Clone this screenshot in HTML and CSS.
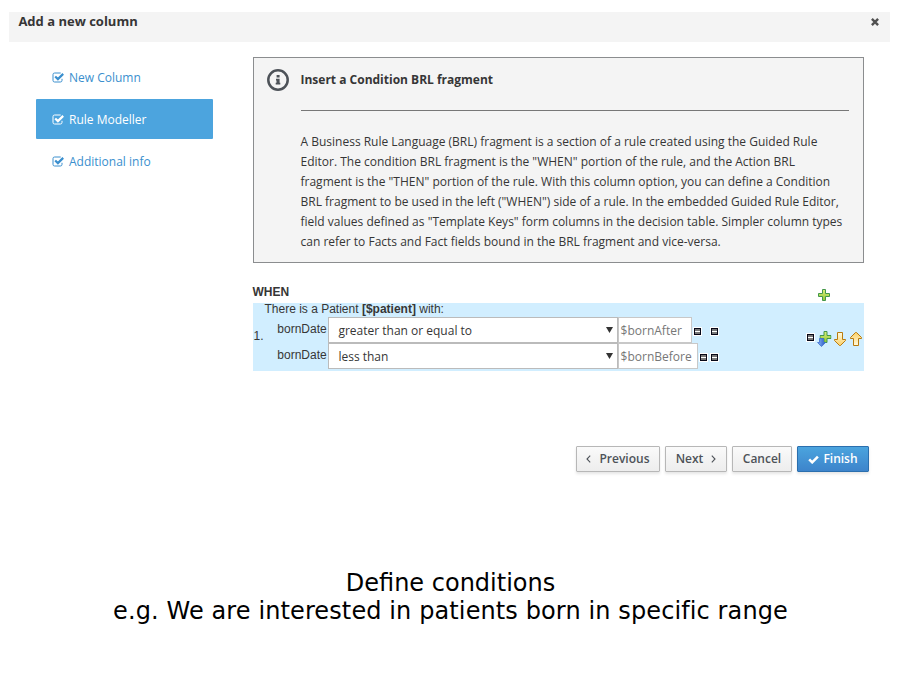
FILE: index.html
```html
<!DOCTYPE html>
<html lang="en">
<head>
<meta charset="utf-8">
<title>Add a new column</title>
<link rel="stylesheet" href="styles.css">
</head>
<body>
<svg class="defs" width="0" height="0" aria-hidden="true">
  <defs>
    <linearGradient id="gold" x1="0" y1="0" x2="0" y2="1"><stop offset="0" stop-color="#fffbe0"/><stop offset="1" stop-color="#fbd068"/></linearGradient>
    <linearGradient id="green" x1="0" y1="0" x2="0" y2="1"><stop offset="0" stop-color="#dcef7c"/><stop offset="1" stop-color="#8fc832"/></linearGradient>
    <linearGradient id="blue" x1="0" y1="0" x2="1" y2="0"><stop offset="0" stop-color="#8db5f5"/><stop offset="1" stop-color="#2457c4"/></linearGradient>
    <symbol id="checkbox" viewBox="0 0 12 11"><path d="M8.700 1H2.600A1.600 1.600 0 0 0 1 2.600v5.800A1.600 1.600 0 0 0 2.600 10h5.800a1.600 1.600 0 0 0 1.600-1.600V6.800" fill="none" stroke="currentColor" stroke-width="1"/><path d="M3.200 4.500 5.900 7.100 11.200 1.900" fill="none" stroke="currentColor" stroke-width="2.200"/></symbol>
    <symbol id="minus" viewBox="0 0 9 9"><path fill="#fff" d="M0 0h9v9H0z"/><path fill="#080818" d="M1 1h7v7H1z"/><path fill="#777" d="M2 2h5v5H2z"/><path fill="#fff" d="M2 4h5v1H2z"/></symbol>
    <symbol id="plus" viewBox="0 0 12 12"><path d="M4.500.5h3v4h4v3h-4v4h-3v-4h-4v-3h4z" fill="url(#green)" stroke="#43964a"/></symbol>
    <symbol id="arrow" viewBox="0 0 12 14"><path d="M3.500.5h5v7h3v1L6.500 13.500h-1L.5 8.500v-1h3z" fill="url(#gold)" stroke="#b97a0d"/></symbol>
  </defs>
</svg>
<div class="wizard">
  <header class="title-bar"><span>Add a new column</span>
    <svg class="close" viewBox="0 0 8 8"><path d="M.9.9l6.200 6.200M7.100.9L.9 7.100" stroke="#505050" stroke-width="2.400"/></svg>
  </header>
  <div class="main">
    <nav class="steps">
      <a class="step"><svg><use href="#checkbox"/></svg><span>New Column</span></a>
      <a class="step active"><svg><use href="#checkbox"/></svg><span>Rule Modeller</span></a>
      <a class="step"><svg><use href="#checkbox"/></svg><span>Additional info</span></a>
    </nav>
    <section class="content">
      <div class="info">
        <svg class="info-icon" viewBox="0 0 22 22"><circle cx="11" cy="11" r="9.700" fill="none" stroke="#4d5258" stroke-width="2.500"/><path fill="#4d5258" d="M9.600 6h3v2.500h-3zM9 9.700h3.600v4.100h.7v1.700H8.700v-1.700h.8v-2.300H9z"/></svg>
        <div class="info-text">
          <h2>Insert a Condition BRL fragment</h2>
          <p>A Business Rule Language (BRL) fragment is a section of a rule created using the Guided Rule<br>Editor. The condition BRL fragment is the "WHEN" portion of the rule, and the Action BRL<br>fragment is the "THEN" portion of the rule. With this column option, you can define a Condition<br>BRL fragment to be used in the left ("WHEN") side of a rule. In the embedded Guided Rule Editor,<br>field values defined as "Template Keys" form columns in the decision table. Simpler column types<br>can refer to Facts and Fact fields bound in the BRL fragment and vice-versa.</p>
        </div>
      </div>
      <div class="when"><b>WHEN</b><svg class="plus"><use href="#plus"/></svg></div>
      <div class="rule">
        <span class="number">1.</span>
        <div class="pattern">
          <div class="pattern-title">There is a Patient <b>[$patient]</b> with:</div>
          <div class="constraint">
            <label>bornDate</label><div class="select"><span>greater than or equal to</span><i></i></div><div class="field after">$bornAfter</div>
            <svg class="minus"><use href="#minus"/></svg><svg class="minus far"><use href="#minus"/></svg>
          </div>
          <div class="constraint">
            <label>bornDate</label><div class="select"><span>less than</span><i></i></div><div class="field before">$bornBefore</div>
            <svg class="minus"><use href="#minus"/></svg><svg class="minus near"><use href="#minus"/></svg>
          </div>
        </div>
        <div class="actions">
          <svg class="minus"><use href="#minus"/></svg>
          <svg class="insert" viewBox="0 0 15 16"><use href="#plus" x="2.500" y="0" width="12" height="12"/><path d="M2.500 7.500h4v4h2L4.800 15.300h-.6L.6 11.500h1.900z" fill="url(#blue)" stroke="#3d6fd0" stroke-width=".8"/></svg>
          <svg class="arrow"><use href="#arrow"/></svg>
          <svg class="arrow up"><use href="#arrow"/></svg>
        </div>
      </div>
    </section>
  </div>
  <footer class="buttons">
    <button class="prev"><svg class="chev" viewBox="0 0 5 8"><path d="M4.200.7 1 4l3.200 3.300" fill="none" stroke="#4d5258" stroke-width="1.100"/></svg><span>Previous</span></button>
    <button class="next"><span>Next</span><svg class="chev" viewBox="0 0 5 8"><path d="M.8.7 4 4 .8 7.300" fill="none" stroke="#4d5258" stroke-width="1.100"/></svg></button>
    <button class="cancel"><span>Cancel</span></button>
    <button class="finish"><svg class="check" viewBox="0 0 11 9"><path d="M1.200 4.300 4.200 7.300 9.900 1.600" fill="none" stroke="#fff" stroke-width="2.600"/></svg><span>Finish</span></button>
  </footer>
</div>
<div class="caption"><div>Define conditions</div><div class="example">e.g. We are interested in patients born in specific range</div></div>
</body>
</html>
```
FILE: styles.css
```css
* { box-sizing: border-box; }
body { margin: 0; background: #fff; color: #363636; font: 12px/20px "Open Sans", sans-serif; overflow: hidden; }
svg { display: block; flex: none; }
.defs { position: absolute; }
.wizard { padding: 12px 10px 0 9px; }
.title-bar { height: 30px; background: #f4f4f4; display: flex; justify-content: space-between; align-items: flex-start; padding: 0 11px 0 9.400px; font-weight: 700; font-size: 13px; line-height: 19px; }
.close { width: 8px; height: 8px; margin-top: 6px; }
.main { display: flex; gap: 40px; padding: 15px 26px 0 27px; }
.steps { width: 177px; display: flex; flex-direction: column; gap: 2px; }
.step { height: 40px; display: flex; align-items: center; gap: 5px; padding-left: 16px; color: #3a8fce; border-radius: 1px; }
.step svg { width: 12px; height: 11px; }
.step span { padding-top: 2px; }
.step.active { background: #4ca4de; color: #fff; }
.content { width: 611px; }
.info { height: 206px; border: 1px solid #8b8d8f; background: #f4f4f4; display: flex; gap: 12px; padding: 10.500px 14px 0 12.500px; }
.info-icon { width: 22px; height: 22px; }
.info-text { flex: 1; white-space: nowrap; }
h2 { margin: 0; height: 42.500px; border-bottom: 1px solid #777; font-size: 12px; line-height: 22px; }
p { margin: 21px 0 0; }
.when { height: 40px; padding: 19px 34px 0 0; display: flex; justify-content: space-between; font-family: "Liberation Sans", sans-serif; }
.when b { margin-left: -.5px; }
.plus { width: 12px; height: 12px; margin-top: 7px; }
.rule { height: 68px; background: #d1eeff; display: flex; font-family: "Liberation Sans", sans-serif; }
.number { width: 12px; padding: 23px 0 0 .5px; }
.pattern { width: 542px; }
.pattern-title { height: 14px; margin-left: -.5px; line-height: 13px; }
.constraint { height: 26px; display: flex; align-items: center; }
label { width: 63px; height: 26px; padding-right: 1.300px; text-align: right; line-height: 24px; }
.select, .field { height: 26px; border: 1px solid #bbb; background: #fff; font: 12px/25px "Open Sans", sans-serif; white-space: nowrap; }
.select { width: 290px; padding: 0 4px 0 9.400px; display: flex; justify-content: space-between; }
.select i { margin-top: 9px; width: 7px; height: 6px; background: #333; clip-path: polygon(0 0, 100% 0, 50% 100%); }
.field { padding-left: 1.600px; border-color: #c8c8c8; color: #777; }
.after { width: 74px; }
.before { width: 80px; }
.minus { width: 9px; height: 9px; margin: 2px 0 0 1px; }
.far { margin-left: 8px; }
.near { margin-left: 2px; }
.actions { display: flex; align-items: flex-start; padding-top: 28px; }
.actions .minus { margin: 2px 0 0 -1px; }
.insert { width: 15px; height: 16px; margin-left: 1.500px; }
.arrow { width: 12px; height: 14px; margin: 1px 0 0 2.500px; }
.up { margin-left: 4px; transform: rotate(180deg); }
.buttons { display: flex; justify-content: flex-end; gap: 5px; padding: 75px 21px 0 0; }
button { height: 26px; padding: 0; display: flex; align-items: center; justify-content: center; border: 1px solid #b7b7b7; border-radius: 1px; background: linear-gradient(#fafafa, #ededed); box-shadow: 0 2px 3px rgba(3, 3, 3, .1); color: #4d5258; font: 600 12px/24px "Open Sans", sans-serif; }
.chev { width: 5px; height: 8px; }
.prev { width: 84px; gap: 8px; }
.next { width: 62px; gap: 8px; }
.cancel { width: 60px; }
.finish { width: 72px; gap: 4px; color: #fff; border-color: #2b6fae; background: linear-gradient(#4ba4de, #3d84cb); }
.check { width: 11px; height: 9px; }
.caption { margin-top: 97px; text-align: center; padding-left: 1px; color: #000; font: 24px/28px "DejaVu Sans", sans-serif; white-space: nowrap; }
.example { letter-spacing: .11px; font-variant-ligatures: common-ligatures; }
```
